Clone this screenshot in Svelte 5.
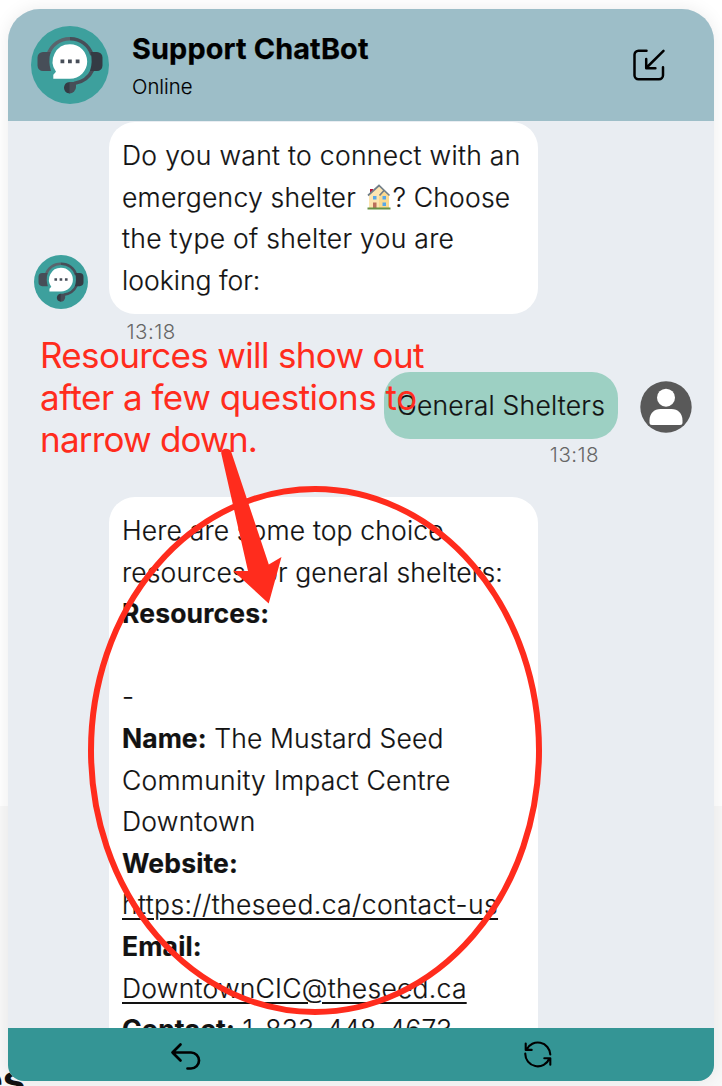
<script>
  const choices = ['Do you want to connect with an', 'emergency shelter ', 'the type of shelter you are', 'looking for:'];
  const note = ['Resources will show out', 'after a few questions to', 'narrow down.'];
</script>

{#snippet bot(size)}
  <svg class="bot" width={size} height={size} viewBox="0 0 78 78">
    <circle cx="39" cy="39" r="39" fill="#3da09d" />
    <path d="M17 29A22.5 22.5 0 0 1 39 12.7" fill="none" stroke="#5a646c" stroke-width="3.6" />
    <path d="M39 12.7A22.5 22.5 0 0 1 61 29" fill="none" stroke="#474e58" stroke-width="3.6" />
    <path d="M61.5 44C58 52 52 56 43 57.5" fill="none" stroke="#474e58" stroke-width="3.6" />
    <path d="M19.500 26H12a5.500 5.500 0 0 0-5.500 5.500v8A5.500 5.500 0 0 0 12 45h8q-3-9-.5-19z" fill="#474e58" />
    <path d="M59.500 26H66a5.500 5.500 0 0 1 5.500 5.500v8A5.500 5.500 0 0 1 66 45h-7q3-9 .5-19z" fill="#343b44" />
    <path d="M39 56c-8 0-8 11.500 0 11.500z" fill="#343b44" />
    <path d="M38.500 56H45v5a6.500 6.500 0 0 1-6.500 6.500z" fill="#474e58" />
    <path d="M39 18.300a17.200 17.200 0 0 1 0 34.400H22.300v-4l2.700-3A17.200 17.200 0 0 1 39 18.300z" fill="#fff" />
    <path d="M29.500 33.500h3.800v3.800h-3.800zM37 33.500h3.800v3.800H37zM44.700 33.500h3.800v3.800h-3.800z" fill="#474e58" />
  </svg>
{/snippet}

<div class="page">
  <div class="lower-band"></div>
  <span class="page-text">es</span>
  <section class="chat">
    <header>
      {@render bot(78)}
      <div class="who">
        <h1>Support ChatBot</h1>
        <p>Online</p>
      </div>
      <svg class="minimize" width="34" height="34" viewBox="0 0 34 34" fill="none" stroke="#000" stroke-width="2.500" stroke-linecap="round" stroke-linejoin="round">
        <path d="M14.500 2.800H6.500a4 4 0 0 0-4 4v20.500a4 4 0 0 0 4 4H27a4 4 0 0 0 4-4v-8M31.500 2.800 14.200 20M14.200 11v9.200h9.200" />
      </svg>
    </header>

    <main>
      <div class="row">
        <div class="avatar">{@render bot(54)}</div>
        <div class="bubble first">
          <div>{choices[0]}</div>
          <div class="shelter">{choices[1]}<svg class="house" width="24" height="26" viewBox="0 0 24 26">
              <path d="M3 5h3v7H3z" fill="#ba163c" />
              <path d="M2 11 12 2l10 9v13H2z" fill="#fde5b1" />
              <path d="M12 13l5-6 5 5v12H12z" fill="#fbda91" />
              <path d="M1 11.500 12 1.500l10.500 10M12.500 11.500 17 6.500" fill="none" stroke="#727f88" stroke-width="1.700" />
              <path d="M6 12h3.500v3.500H6zM15.500 12H19v3.500h-3.500zM15.500 18.500H19V22h-3.500z" fill="#58a8e9" />
              <path d="M6 18.500h3.500V24H6z" fill="#bc6f5c" />
              <path d="M.5 23.500h23v2H.5z" fill="#679145" />
            </svg>? Choose</div>
          <div>{choices[2]}</div>
          <div class="exact">{choices[3]}</div>
        </div>
      </div>
      <time>13:18</time>

      <div class="row mine">
        <div class="bubble reply">General Shelters</div>
        <svg width="52" height="52" viewBox="0 0 52 52">
          <circle cx="26" cy="26" r="25.700" fill="#595959" />
          <circle cx="26" cy="16.700" r="9" fill="#fff" />
          <path d="M9.500 41.500v-2c0-7 4.500-11.500 11-11.500h11c6.500 0 11 4.500 11 11.500v2q0 2.500-2.500 2.500H12q-2.500 0-2.500-2.500z" fill="#fff" />
        </svg>
      </div>
      <time class="right">13:18</time>

      <div class="row last">
        <div class="avatar"></div>
        <div class="bubble results">
          <div>Here are some top choice</div>
          <div>resources for general shelters:</div>
          <div><b>Resources:</b></div>
          <div class="blank"></div>
          <div>-</div>
          <div><b class="exact">Name:</b> The Mustard Seed</div>
          <div class="wide">Community Impact Centre</div>
          <div class="wide">Downtown</div>
          <div><b>Website:</b></div>
          <div><u class="url">https://theseed.ca/contact-us</u></div>
          <div><b>Email:</b></div>
          <div class="wide"><u>DowntownCIC@theseed.ca</u></div>
          <div><b>Contact:</b> 1-833-448-4673</div>
        </div>
      </div>
    </main>

    <footer>
      <div>
        <svg width="32" height="30" viewBox="0 0 32 30" fill="none" stroke="#000" stroke-width="2.700" stroke-linecap="round" stroke-linejoin="round">
          <path d="M11.500 4.500 3.500 12.500l8 8M3.500 12.500H22a8 8 0 0 1 0 16h-3.500" />
        </svg>
      </div>
      <div>
        <svg width="28" height="28" viewBox="0 0 28 28" fill="none" stroke="#000" stroke-width="2.100" stroke-linecap="round" stroke-linejoin="round">
          <path d="M26.300 13.500A12.500 12.500 0 0 0 2.600 8.500M1.700 2.500v6.400h6M1.300 12.500A12.500 12.500 0 0 0 25.400 17.500M26.300 23.800v-6.500h-6" />
        </svg>
      </div>
    </footer>
  </section>

  <svg class="marks" width="722" height="1086" viewBox="0 0 722 1086">
    <ellipse cx="315" cy="750.500" rx="224" ry="261.500" fill="none" stroke="#ff2c1d" stroke-width="6" />
    <path d="M221.300 453.500C220.500 448 229.500 447 231.300 452L268.800 564.500 281.500 557 268.700 603.500 233.300 571 248 571z" fill="#ff2c1d" />
  </svg>
  <div class="note">
    {#each note as line}<div>{line}</div>{/each}
  </div>
</div>

<style>
  :global(body) { margin: 0; background: #fff; }
  .page { position: relative; width: 722px; height: 1086px; overflow: hidden; box-sizing: border-box; padding: 9px 8px 5px; font-family: Inter, "Liberation Sans", sans-serif; background: #fff; }
  .lower-band { position: absolute; left: 0; right: 0; top: 806px; bottom: 0; background: #f8f8f8; }
  .page-text { position: absolute; left: -21px; top: 1056px; font-size: 40px; line-height: 48px; font-weight: 700; color: #111; }
  .chat { position: relative; height: 1072px; display: flex; flex-direction: column; overflow: hidden; border-radius: 32px 32px 16px 16px; box-shadow: 0 0 18px rgba(0, 0, 0, .08); background: #e9edf2; }
  header { box-sizing: border-box; height: 112px; flex: none; display: flex; align-items: center; padding: 0 48px 0 23px; background: #9dbec8; }
  .bot { display: block; }
  .who { flex: 1; margin-left: 23px; padding-top: 6px; }
  h1 { margin: 0; font-size: 28.8px; line-height: 38px; font-weight: 700; color: #000; letter-spacing: .16px; -webkit-text-stroke: .25px #000; }
  p { margin: 0; font-size: 20.3px; line-height: 38px; font-weight: 300; color: #000; -webkit-text-stroke: .15px #000; }
  main { flex: 1; min-height: 0; overflow: hidden; font-size: 26.5px; line-height: 41.6px; font-weight: 300; color: #121212; padding-top: 1px; letter-spacing: .16px; }
  .row { display: flex; align-items: flex-end; }
  .avatar { width: 75px; flex: none; margin-left: 26px; margin-bottom: 5px; }
  .bubble { box-sizing: border-box; padding: 13px; border-radius: 26px; background: #fff; white-space: nowrap; -webkit-text-stroke: .2px #121212; }
  .bubble > div { height: 41.6px; }
  .first, .results { width: 429px; height: 192px; }
  .first { letter-spacing: .31px; }
  .shelter { letter-spacing: .22px; }
  .exact { letter-spacing: .03px; }
  .wide { letter-spacing: .25px; }
  .url { letter-spacing: .41px; }
  .results { height: auto; }
  .house { vertical-align: -3px; margin: 0 2px 0 3px; }
  time { display: block; margin-left: 118.5px; font-size: 20.5px; line-height: 36px; color: #666; letter-spacing: .45px; }
  .mine { justify-content: flex-end; align-items: center; gap: 22px; padding-right: 22px; margin-top: 22px; }
  .mine svg { position: relative; top: 1px; }
  .reply { width: 234px; height: 67px; background: #9dd0c3; letter-spacing: .23px; }
  .right { margin: -2px 0 0; padding-right: 115px; text-align: right; }
  .last { margin-top: 24px; }
  b { font-weight: 700; }
  u { text-decoration-thickness: 2px; text-underline-offset: 4px; }
  footer { height: 53px; flex: none; display: grid; grid-template-columns: 1fr 1fr; background: #349595; }
  footer div { display: flex; align-items: center; justify-content: center; }
  .marks { position: absolute; left: 0; top: 0; }
  .note { position: absolute; left: 40px; top: 334px; font-size: 35px; line-height: 42px; letter-spacing: -.66px; color: #ff2c1d; white-space: nowrap; }
  .note div:nth-child(2) { letter-spacing: -.5px; }
  .note div:nth-child(3) { letter-spacing: -.8px; }
</style>
